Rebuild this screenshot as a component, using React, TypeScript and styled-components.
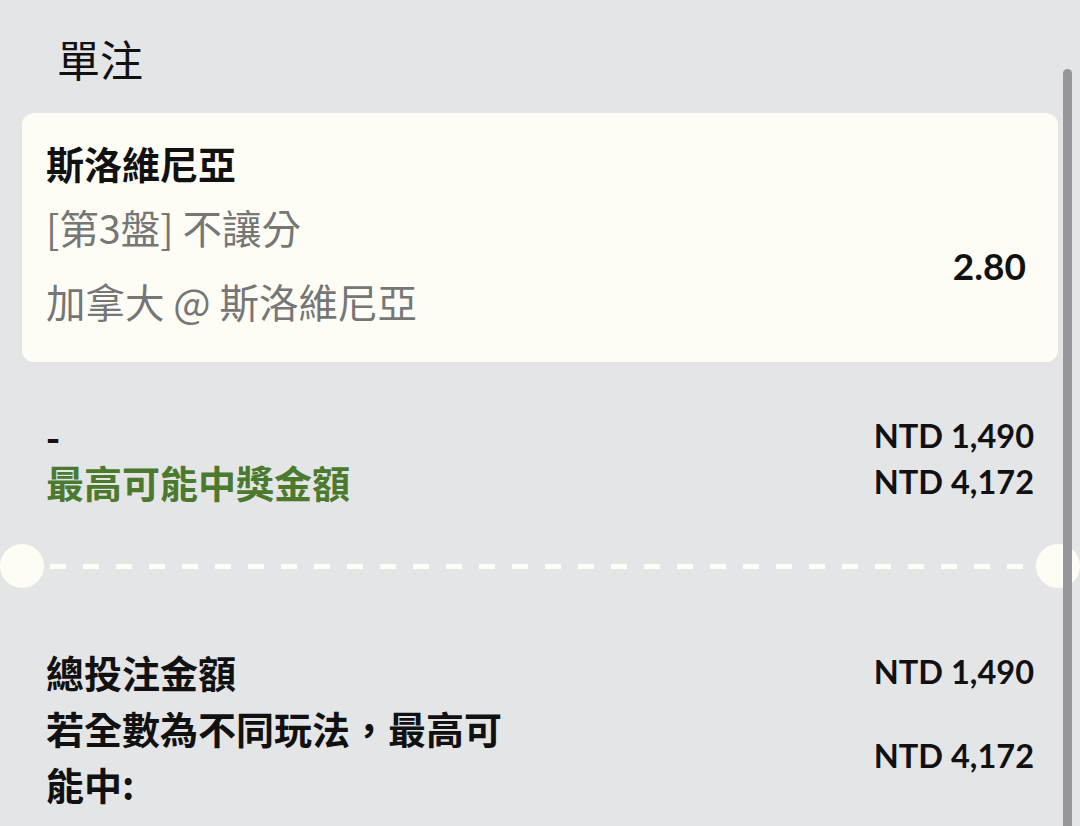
import React from 'react';
import styled, { createGlobalStyle } from 'styled-components';

const GlobalStyle = createGlobalStyle`
  html, body {
    margin: 0;
    padding: 0;
    background: #e4e5e7;
  }
  body {
    width: 1080px;
    height: 826px;
    overflow: hidden;
    font-family: "Noto Sans CJK TC", "Noto Sans", sans-serif;
    color: #111;
  }
`;

const CJK = `"Noto Sans CJK TC", "Noto Sans", sans-serif`;
const NUM = `Lato, "Noto Sans CJK TC", sans-serif`;

interface Bet {
  team: string;
  market: string;
  match: string;
  odds: string;
}

const bet: Bet = {
  team: '斯洛維尼亞',
  market: '[第3盤] 不讓分',
  match: '加拿大 @ 斯洛維尼亞',
  odds: '2.80',
};

const App: React.FC = () => {
  return (
    <Page>
      <GlobalStyle />
      <Title>單注</Title>
      <Content>
        <Card>
          <CardInfo>
            <TeamName>{bet.team}</TeamName>
            <Market>{bet.market}</Market>
            <Match>{bet.match}</Match>
          </CardInfo>
          <Odds>{bet.odds}</Odds>
        </Card>

        <Summary>
          <Row height={46}>
            <Label>-</Label>
            <Amount>NTD 1,490</Amount>
          </Row>
          <Row height={46}>
            <Label green>最高可能中獎金額</Label>
            <Amount>NTD 4,172</Amount>
          </Row>
        </Summary>

        <Divider>
          <Notch side="left" />
          <DashLine />
          <Notch side="right" />
        </Divider>

        <Totals>
          <Row height={56}>
            <Label>總投注金額</Label>
            <Amount>NTD 1,490</Amount>
          </Row>
          <Row height={56}>
            <WrapLabel>若全數為不同玩法，最高可能中:</WrapLabel>
            <Amount>NTD 4,172</Amount>
          </Row>
        </Totals>
      </Content>
      <ScrollThumb />
    </Page>
  );
};

export default App;

// Styled Components
const Page = styled.div`
  position: relative;
  width: 1080px;
  height: 826px;
  overflow: hidden;
  display: flex;
  flex-direction: column;
`;

const Title = styled.h1`
  margin: 28px 0 0 57px;
  font-family: ${CJK};
  font-weight: 400;
  font-size: 43px;
  line-height: 60px;
  color: #111;
`;

const Content = styled.div`
  margin: 25px 22px 0 22px;
  display: flex;
  flex-direction: column;
`;

const Card = styled.div`
  height: 249px;
  box-sizing: border-box;
  background: #fdfdf5;
  border-radius: 12px;
  padding: 25px 32px 0 24px;
  display: flex;
  flex-direction: row;
  justify-content: space-between;
  align-items: center;
`;

const CardInfo = styled.div`
  display: flex;
  flex-direction: column;
  align-self: flex-start;
`;

const TeamName = styled.div`
  font-family: ${CJK};
  font-weight: 700;
  font-size: 38px;
  line-height: 50px;
  color: #111;
`;

const Market = styled.div`
  margin-top: 14px;
  font-family: ${CJK};
  font-weight: 400;
  font-size: 39.5px;
  line-height: 50px;
  color: #767676;
`;

const Match = styled(Market)`
  margin-top: 24px;
`;

const Odds = styled.div`
  margin-top: 32px;
  font-family: ${NUM};
  font-weight: 700;
  font-size: 37px;
  line-height: 50px;
  color: #111;
`;

const Summary = styled.div`
  margin-top: 51px;
  padding: 0 24px;
  display: flex;
  flex-direction: column;
`;

const Row = styled.div<{ height: number }>`
  display: flex;
  flex-direction: row;
  justify-content: space-between;
  align-items: center;
  min-height: ${props => props.height}px;
  line-height: ${props => props.height}px;
`;

const Label = styled.div<{ green?: boolean }>`
  font-family: ${CJK};
  font-weight: 700;
  font-size: 38px;
  color: ${props => (props.green ? '#4b7a2e' : '#111')};
`;

const WrapLabel = styled(Label)`
  width: 480px;
`;

const Amount = styled.div`
  font-family: ${NUM};
  font-weight: 700;
  font-size: 32.5px;
  color: #111;
  white-space: nowrap;
`;

const Divider = styled.div`
  position: relative;
  margin-top: 39px;
  height: 44px;
  display: flex;
  align-items: center;
  padding: 0 28px;
`;

const Notch = styled.div<{ side: 'left' | 'right' }>`
  position: absolute;
  top: 0;
  ${props => props.side}: -22px;
  width: 44px;
  height: 44px;
  border-radius: 50%;
  background: #fdfdf5;
`;

const DashLine = styled.div`
  flex: 1;
  height: 5px;
  background: repeating-linear-gradient(
    to right,
    #fdfdf5 0,
    #fdfdf5 16px,
    transparent 16px,
    transparent 33px
  );
`;

const Totals = styled.div`
  margin-top: 56px;
  padding: 0 24px;
  display: flex;
  flex-direction: column;
`;

const ScrollThumb = styled.div`
  position: absolute;
  top: 69px;
  left: 1063px;
  width: 9px;
  height: 800px;
  border-radius: 5px;
  background: rgba(140, 140, 145, 0.9);
`;
